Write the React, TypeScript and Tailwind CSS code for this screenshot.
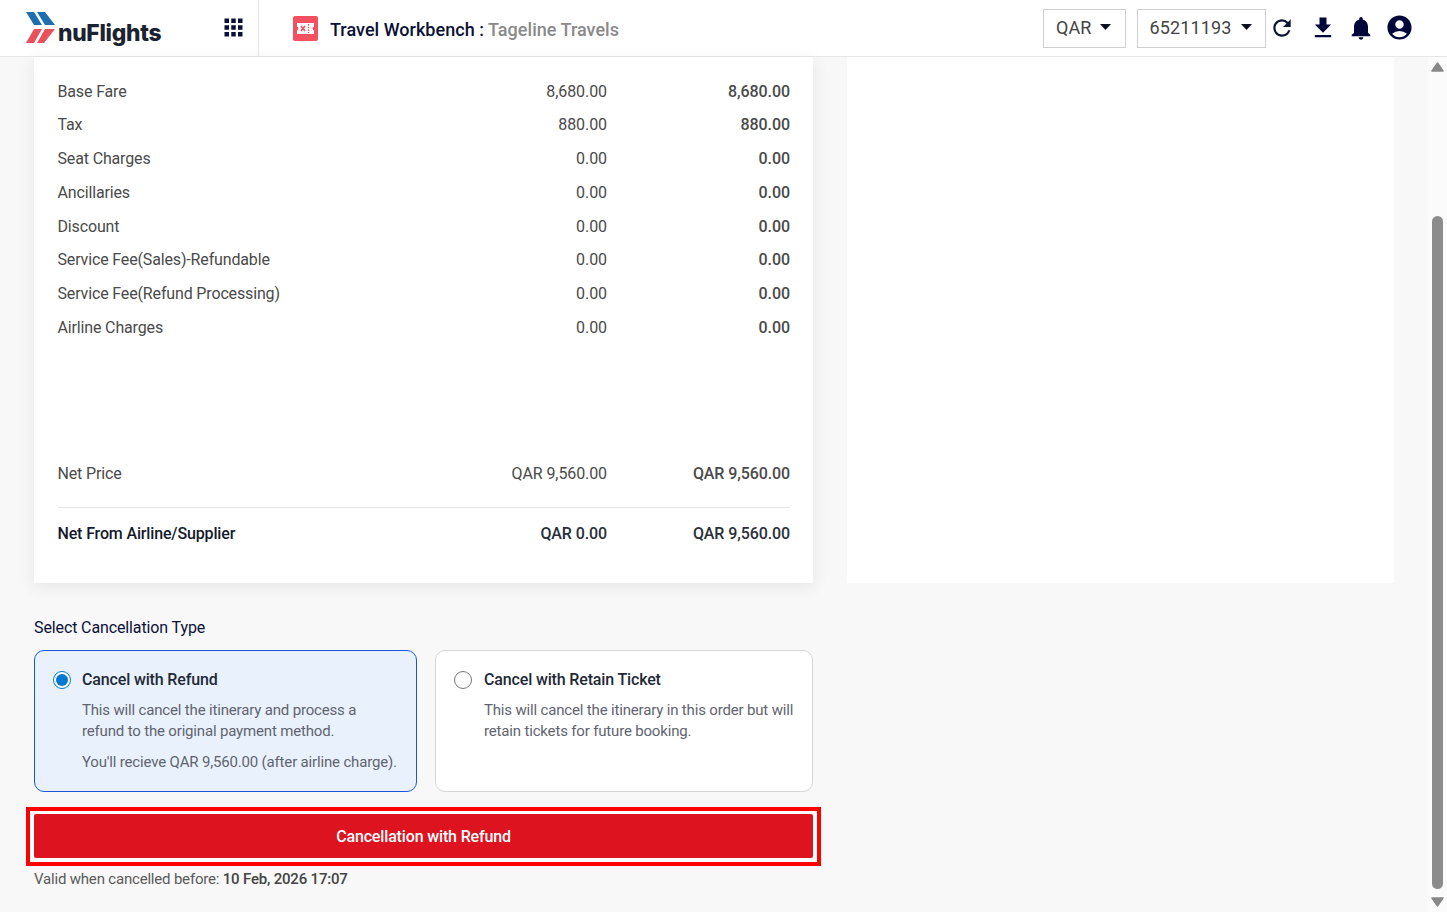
import React from "react";
import { MdApps, MdRefresh, MdFileDownload, MdNotifications, MdAccountCircle } from "react-icons/md";

const rows: [string, string, string][] = [
  ["Base Fare", "8,680.00", "8,680.00"],
  ["Tax", "880.00", "880.00"],
  ["Seat Charges", "0.00", "0.00"],
  ["Ancillaries", "0.00", "0.00"],
  ["Discount", "0.00", "0.00"],
  ["Service Fee(Sales)-Refundable", "0.00", "0.00"],
  ["Service Fee(Refund Processing)", "0.00", "0.00"],
  ["Airline Charges", "0.00", "0.00"],
];

function Caret() {
  return (
    <svg width="11" height="6" viewBox="0 0 11 6" className="block">
      <path d="M0 0h11L5.5 6z" fill="#0b0f1e" />
    </svg>
  );
}

function Logo() {
  return (
    <div className="flex items-end w-[135px] h-[36px] relative">
      <svg width="32" height="32" viewBox="0 0 32 32" className="block shrink-0 mb-[2px]">
        <path d="M0 0h8l8 13H8z" fill="#1f6fae" />
        <path d="M11 0h8l10 13h-10z" fill="#1f6fae" />
        <path d="M8 17h8L8 31H0z" fill="#ea4f5c" />
        <path d="M19 17h10L18 31H11z" fill="#ea4f5c" />
      </svg>
      <span className="font-['Inter',sans-serif] font-extrabold text-[22.8px] leading-[26px] tracking-[-0.3px] text-[#1c2330] whitespace-nowrap">nuFlights</span>
    </div>
  );
}

function TicketIcon() {
  return (
    <svg width="25" height="25" viewBox="0 0 25 25" className="block shrink-0">
      <rect width="25" height="25" rx="2" fill="#f4505f" />
      <path d="M4 7h17v3.6a2 2 0 0 0 0 3.8V18H4v-3.6a2 2 0 0 0 0-3.8z" fill="#fff" />
      <path d="M8 10l4 5M12 10l-4 5" stroke="#f4505f" strokeWidth="1.6" />
      <path d="M15.5 8v9" stroke="#f4505f" strokeWidth="1.4" strokeDasharray="1.5 1.2" />
    </svg>
  );
}

function Radio({ on }: { on: boolean }) {
  return on ? (
    <span className="w-[18px] h-[18px] rounded-full border-[1.5px] border-[#0078d4] flex items-center justify-center shrink-0 bg-white">
      <span className="w-[12px] h-[12px] rounded-full bg-[#0078d4]" />
    </span>
  ) : (
    <span className="block w-[18px] h-[18px] rounded-full border-[1.5px] border-[#767676] shrink-0 bg-white" />
  );
}

export default function App() {
  return (
    <div className="h-[912px] w-[1447px] overflow-hidden flex flex-col bg-[#f8f8f8] font-['Roboto',sans-serif]">
      <header className="h-[57px] shrink-0 bg-white border-b border-[#e6e6e6] flex items-stretch">
        <div className="w-[259px] shrink-0 border-r border-[#e6e6e6] flex items-center pl-[26px] relative">
          <Logo />
          <MdApps className="text-[#0b1036] ml-[58.5px] mb-[1px]" size={27} />
        </div>
        <div className="flex items-center pl-[34px] flex-1">
          <TicketIcon />
          <span className="ml-[12px] text-[18px] font-medium text-[#0b1036] whitespace-nowrap mt-[2px] tracking-[0.03px]">
            Travel Workbench : <span className="text-[#8a8a8a]">Tageline Travels</span>
          </span>
        </div>
        <div className="flex items-center pr-[33.5px]">
          <div className="w-[83px] h-[39px] mt-[1px] pb-[3px] border border-[#cfcfcf] flex items-center pl-[12px] gap-[9px] text-[18px] text-[#444]">
            QAR <Caret />
          </div>
          <div className="w-[129px] h-[39px] mt-[1px] pb-[3px] border border-[#cfcfcf] flex items-center pl-[11.5px] gap-[9px] text-[18px] text-[#444] ml-[11px] tracking-[0.15px]">
            65211193 <Caret />
          </div>
          <div className="flex items-center mb-[1px]">
            <MdRefresh className="text-[#0b1036] ml-[3px]" size={26} />
            <MdFileDownload className="text-[#02073a] ml-[13.5px]" size={28} />
            <MdNotifications className="text-[#02073a] ml-[10px]" size={28} />
            <MdAccountCircle className="text-[#02073a] ml-[10px]" size={29} />
          </div>
        </div>
      </header>

      <div className="flex-1 flex min-h-0">
        <main className="flex-1 pl-[34px] min-w-0 tracking-[-0.15px]">
          <div className="flex gap-[34px] items-stretch">
            <section className="w-[779px] h-[526px] bg-white shadow-[0_4px_16px_rgba(0,0,0,0.08)] pl-[23.5px] pr-[23px] pt-[17.8px] flex flex-col text-[16px] text-[#4a4a4a]">
              {rows.map(([l, a, b]) => (
                <div key={l} className="flex h-[33.72px] items-center shrink-0">
                  <span className="flex-1">{l}</span>
                  <span className="w-[183px] text-right tracking-[-0.08px]">{a}</span>
                  <span className="w-[183px] text-right font-medium tracking-[-0.08px]">{b}</span>
                </div>
              ))}
              <div className="flex h-[34px] items-center mt-[112px] shrink-0">
                <span className="flex-1">Net Price</span>
                <span className="w-[183px] text-right tracking-[-0.1px]">QAR 9,560.00</span>
                <span className="w-[183px] text-right font-medium tracking-[-0.1px]">QAR 9,560.00</span>
              </div>
              <div className="flex h-[53px] items-center mt-[16px] border-t border-[#e3e3e3] font-medium text-[#2a2f3a] shrink-0">
                <span className="flex-1 text-[#14192c]">Net From Airline/Supplier</span>
                <span className="w-[183px] text-right tracking-[-0.1px]">QAR 0.00</span>
                <span className="w-[183px] text-right tracking-[-0.1px]">QAR 9,560.00</span>
              </div>
            </section>
            <section className="w-[547px] h-[526px] bg-white" />
          </div>

          <div className="w-[779px] mt-[35px]">
            <div className="text-[16px] leading-[19px] text-[#0b1036] tracking-[-0.12px]">Select Cancellation Type</div>
            <div className="flex gap-[18px] mt-[13px]">
              <div className="w-[383px] h-[142px] rounded-[10px] border border-[#1a56db] bg-[#e9f2fc] pl-[18px] pt-[19px] pr-[8px] flex gap-[11px]">
                <div className="pt-[1px]"><Radio on /></div>
                <div>
                  <div className="text-[16px] leading-[20px] font-medium text-[#1f2937]">Cancel with Refund</div>
                  <p className="text-[15px] leading-[21px] text-[#5f6470] mt-[10px] tracking-[-0.17px]">This will cancel the itinerary and process a<br />refund to the original payment method.</p>
                  <p className="text-[15px] leading-[21px] text-[#5f6470] mt-[10px] whitespace-nowrap tracking-[-0.17px]">You'll recieve QAR 9,560.00 (after airline charge).</p>
                </div>
              </div>
              <div className="w-[378px] h-[142px] rounded-[10px] border border-[#d6d6d6] bg-white pl-[18px] pt-[19px] pr-[8px] flex gap-[12px]">
                <div className="pt-[1px]"><Radio on={false} /></div>
                <div>
                  <div className="text-[16px] leading-[20px] font-medium text-[#1f2937]">Cancel with Retain Ticket</div>
                  <p className="text-[15px] leading-[21px] text-[#5f6470] mt-[10px] whitespace-nowrap tracking-[-0.17px]">This will cancel the itinerary in this order but will<br />retain tickets for future booking.</p>
                </div>
              </div>
            </div>
            <div className="mt-[15px] -mx-[8px] border-[4px] border-[#ff0000] bg-white pt-[3px] pb-[4px] px-[4px]">
              <div className="h-[44px] pt-[1px] bg-[#de1320] rounded-[2px] flex items-center justify-center text-[16px] font-medium text-white">
                Cancellation with Refund
              </div>
            </div>
            <div className="mt-[3px] text-[15px] leading-[20px] text-[#5a5a5a] tracking-[-0.19px]">
              Valid when cancelled before: <span className="font-medium text-[#444]">10 Feb, 2026 17:07</span>
            </div>
          </div>
        </main>

        <aside className="w-[19px] shrink-0 bg-[#fbfbfb] flex flex-col items-center">
          <svg width="13" height="10" viewBox="0 0 13 10" className="block mt-[5px]">
            <path d="M6.5 1L12 9H1z" fill="#888" stroke="#888" strokeWidth="1.5" strokeLinejoin="round" />
          </svg>
          <div className="flex-1" />
          <div className="w-[11px] h-[673px] rounded-[6px] bg-[#8c8c8c]" />
          <svg width="13" height="10" viewBox="0 0 13 10" className="block mt-[8px] mb-[5px]">
            <path d="M1 1h11L6.5 9z" fill="#888" stroke="#888" strokeWidth="1.5" strokeLinejoin="round" />
          </svg>
        </aside>
      </div>
    </div>
  );
}
